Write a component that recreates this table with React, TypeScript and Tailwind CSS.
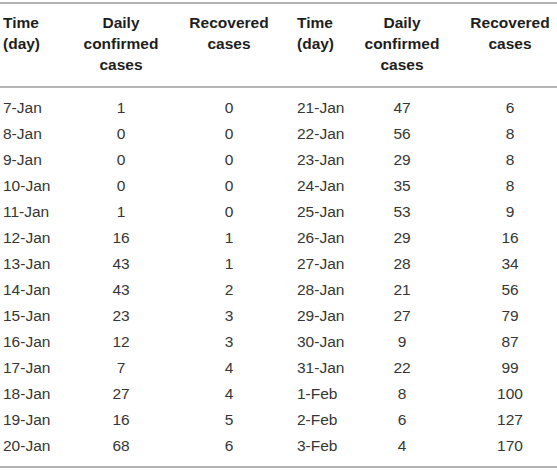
import React from 'react';

const rows: [string, number, number, string, number, number][] = [
  ['7-Jan', 1, 0, '21-Jan', 47, 6],
  ['8-Jan', 0, 0, '22-Jan', 56, 8],
  ['9-Jan', 0, 0, '23-Jan', 29, 8],
  ['10-Jan', 0, 0, '24-Jan', 35, 8],
  ['11-Jan', 1, 0, '25-Jan', 53, 9],
  ['12-Jan', 16, 1, '26-Jan', 29, 16],
  ['13-Jan', 43, 1, '27-Jan', 28, 34],
  ['14-Jan', 43, 2, '28-Jan', 21, 56],
  ['15-Jan', 23, 3, '29-Jan', 27, 79],
  ['16-Jan', 12, 3, '30-Jan', 9, 87],
  ['17-Jan', 7, 4, '31-Jan', 22, 99],
  ['18-Jan', 27, 4, '1-Feb', 8, 100],
  ['19-Jan', 16, 5, '2-Feb', 6, 127],
  ['20-Jan', 68, 6, '3-Feb', 4, 170],
];

const App = () => {
  return (
    <div className="w-[557px] h-[476px] bg-white pt-[2px]" style={{ fontFamily: '"Liberation Sans", Arial, sans-serif' }}>
      <table className="w-[557px] table-fixed border-collapse text-[15.5px]">
        <colgroup>
          <col className="w-[62px]" />
          <col className="w-[118px]" />
          <col className="w-[98px]" />
          <col className="w-[75px]" />
          <col className="w-[98px]" />
          <col className="w-[106px]" />
        </colgroup>
        {/* Header */}
        <thead>
          <tr className="border-y-2 border-[#b4b4b4] text-[#1e1e1e] font-bold leading-[21px] align-top">
            <th className="pt-[8px] pb-[11px] pl-[3px] text-left font-bold">Time<br />(day)</th>
            <th className="pt-[8px] pb-[11px] text-center font-bold">Daily<br />confirmed<br />cases</th>
            <th className="pt-[8px] pb-[11px] text-center font-bold">Recovered<br />cases</th>
            <th className="pt-[8px] pb-[11px] pl-[19px] text-left font-bold">Time<br />(day)</th>
            <th className="pt-[8px] pb-[11px] text-center font-bold">Daily<br />confirmed<br />cases</th>
            <th className="pt-[8px] pb-[11px] pl-[12px] text-center font-bold">Recovered<br />cases</th>
          </tr>
        </thead>

        <tbody className="border-b-2 border-[#b4b4b4] text-[#363636] leading-[26px]">
          {rows.map((r, i) => {
            const pad = i === 0 ? 'pt-[7px]' : i === rows.length - 1 ? 'pb-[7px]' : '';
            return (
              <tr key={r[0]}>
                <td className={`pl-[3px] text-left ${pad}`}>{r[0]}</td>
                <td className={`text-center ${pad}`}>{r[1]}</td>
                <td className={`text-center ${pad}`}>{r[2]}</td>
                <td className={`pl-[19px] text-left ${pad}`}>{r[3]}</td>
                <td className={`text-center ${pad}`}>{r[4]}</td>
                <td className={`pl-[12px] text-center ${pad}`}>{r[5]}</td>
              </tr>
            );
          })}
        </tbody>
      </table>
    </div>
  );
};

export default App;
